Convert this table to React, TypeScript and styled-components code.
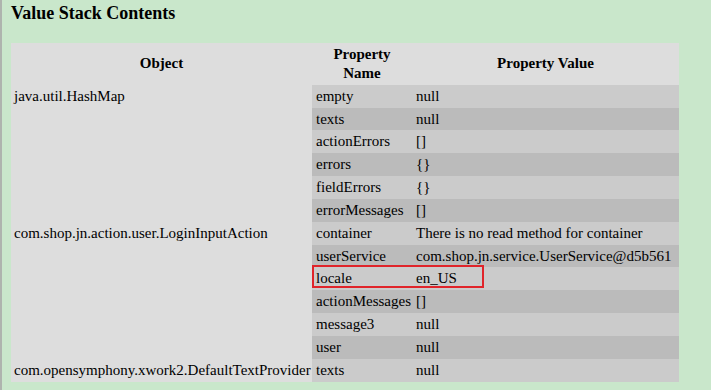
import React from "react";
import styled, { createGlobalStyle } from "styled-components";

const GlobalStyle = createGlobalStyle`
  html, body {
    margin: 0;
    padding: 0;
    background: #c9e7cb;
  }
  body {
    font-family: "Liberation Serif", "Times New Roman", serif;
    color: #000;
  }
`;

const Page = styled.div`
  min-height: 390px;
  box-sizing: border-box;
  border-left: 2px solid #aeb4ae;
  padding: 3px 9px 0;
  background: #c9e7cb;
`;

const Title = styled.h3`
  margin: 0 0 19px;
  font-size: 18px;
  line-height: 21px;
  font-weight: bold;
`;

const StackTable = styled.table`
  width: 668px;
  table-layout: fixed;
  border-collapse: collapse;
  border-spacing: 0;
  font-family: "Liberation Serif", "Times New Roman", serif;
  font-size: 15px;
  line-height: 18.85px;
`;

const HeadCell = styled.th<{ $w: number }>`
  box-sizing: border-box;
  width: ${(p) => p.$w}px;
  padding: 2px 4px;
  background: #dddddd;
  font-weight: bold;
  text-align: center;
  vertical-align: middle;
`;

const ObjectCell = styled.td`
  box-sizing: border-box;
  padding: 2px 3px;
  background: #dddddd;
  white-space: nowrap;
  vertical-align: top;
`;

const PropCell = styled.td<{ $dark: boolean }>`
  box-sizing: border-box;
  position: relative;
  padding: 2px 4px;
  background: ${(p) => (p.$dark ? "#bbbbbb" : "#cbcbcb")};
  white-space: nowrap;
  vertical-align: top;
`;

// red frame drawn over the highlighted property row
const Marker = styled.span`
  position: absolute;
  z-index: 2;
  left: 0;
  top: -2px;
  width: 172px;
  height: 23px;
  box-sizing: border-box;
  border: 2px solid #e0242a;
  pointer-events: none;
`;

type Row = { obj?: string; name: string; value: string; marked?: boolean };

const rows: Row[] = [
  { obj: "java.util.HashMap", name: "empty", value: "null" },
  { name: "texts", value: "null" },
  { name: "actionErrors", value: "[]" },
  { name: "errors", value: "{}" },
  { name: "fieldErrors", value: "{}" },
  { name: "errorMessages", value: "[]" },
  {
    obj: "com.shop.jn.action.user.LoginInputAction",
    name: "container",
    value: "There is no read method for container",
  },
  { name: "userService", value: "com.shop.jn.service.UserService@d5b561" },
  { name: "locale", value: "en_US", marked: true },
  { name: "actionMessages", value: "[]" },
  { name: "message3", value: "null" },
  { name: "user", value: "null" },
  {
    obj: "com.opensymphony.xwork2.DefaultTextProvider",
    name: "texts",
    value: "null",
  },
];

export default function App() {
  return (
    <>
      <GlobalStyle />
      <Page>
        <Title>Value Stack Contents</Title>
        <StackTable>
          <thead>
            <tr>
              <HeadCell $w={301}>Object</HeadCell>
              <HeadCell $w={100}>Property Name</HeadCell>
              <HeadCell $w={267}>Property Value</HeadCell>
            </tr>
          </thead>
          <tbody>
            {rows.map((r, i) => (
              <tr key={i}>
                <ObjectCell>{r.obj ?? ""}</ObjectCell>
                <PropCell $dark={i % 2 === 1}>
                  {r.name}
                  {r.marked && <Marker />}
                </PropCell>
                <PropCell $dark={i % 2 === 1}>{r.value}</PropCell>
              </tr>
            ))}
          </tbody>
        </StackTable>
      </Page>
    </>
  );
}
